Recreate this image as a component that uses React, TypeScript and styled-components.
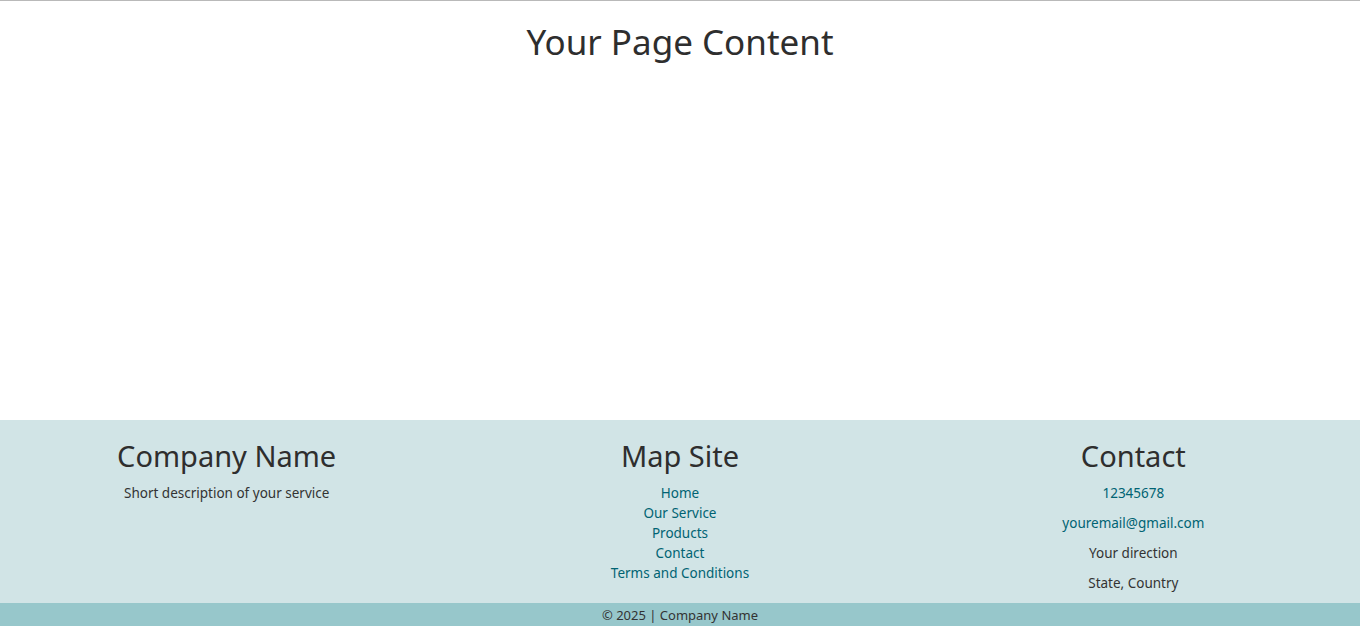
import React from "react";
import styled, { createGlobalStyle } from "styled-components";

const Global = createGlobalStyle`
  html, body { margin: 0; padding: 0; }
  body { font-family: "Noto Sans", "Open Sans", sans-serif; color: #333; background: #fff; }
`;

const Page = styled.div`
  display: flex;
  flex-direction: column;
  height: 626px;
  border-top: 1px solid #b9b9b9;
  box-sizing: border-box;
`;

const Main = styled.main`
  flex: 1;
  display: flex;
  justify-content: center;
`;

const Title = styled.h1`
  margin: 20px 0 0;
  font-size: 35px;
  font-weight: 400;
  line-height: 42px;
  color: #2e2e2e;
`;

const Footer = styled.footer`
  background: #d1e4e6;
  display: grid;
  grid-template-columns: repeat(3, 1fr);
  height: 183px;
  padding-top: 18px;
  box-sizing: border-box;
`;

const Column = styled.div`
  display: flex;
  flex-direction: column;
  align-items: center;
  text-align: center;
`;

const ColTitle = styled.h2`
  margin: 0 0 9px;
  font-size: 29px;
  font-weight: 400;
  line-height: 36px;
  color: #2e2e2e;
`;

const Text = styled.p`
  margin: 0;
  font-size: 13.5px;
  line-height: 20px;
  color: #333;
`;

const LinkList = styled.ul`
  list-style: none;
  margin: 0;
  padding: 0;
`;

const Link = styled.a`
  display: block;
  font-size: 13.5px;
  line-height: 20px;
  color: #006373;
  text-decoration: none;
`;

const ContactItem = styled.p<{ $link?: boolean }>`
  margin: 0 0 10px;
  font-size: 13.5px;
  line-height: 20px;
  color: ${(p) => (p.$link ? "#006373" : "#333")};
`;

const Bottom = styled.div`
  background: #97c7cb;
  height: 23px;
  display: flex;
  align-items: center;
  justify-content: center;
  font-size: 13px;
  color: #333;
`;

export default function App() {
  return (
    <>
      <Global />
      <Page>
        <Main>
          <Title>Your Page Content</Title>
        </Main>
        <Footer>
          <Column>
            <ColTitle>Company Name</ColTitle>
            <Text>Short description of your service</Text>
          </Column>
          <Column>
            <ColTitle>Map Site</ColTitle>
            <LinkList>
              {["Home", "Our Service", "Products", "Contact", "Terms and Conditions"].map((l) => (
                <li key={l}>
                  <Link href="#">{l}</Link>
                </li>
              ))}
            </LinkList>
          </Column>
          <Column>
            <ColTitle>Contact</ColTitle>
            <ContactItem $link>12345678</ContactItem>
            <ContactItem $link>youremail@gmail.com</ContactItem>
            <ContactItem>Your direction</ContactItem>
            <ContactItem>State, Country</ContactItem>
          </Column>
        </Footer>
        <Bottom>© 2025 | Company Name</Bottom>
      </Page>
    </>
  );
}
